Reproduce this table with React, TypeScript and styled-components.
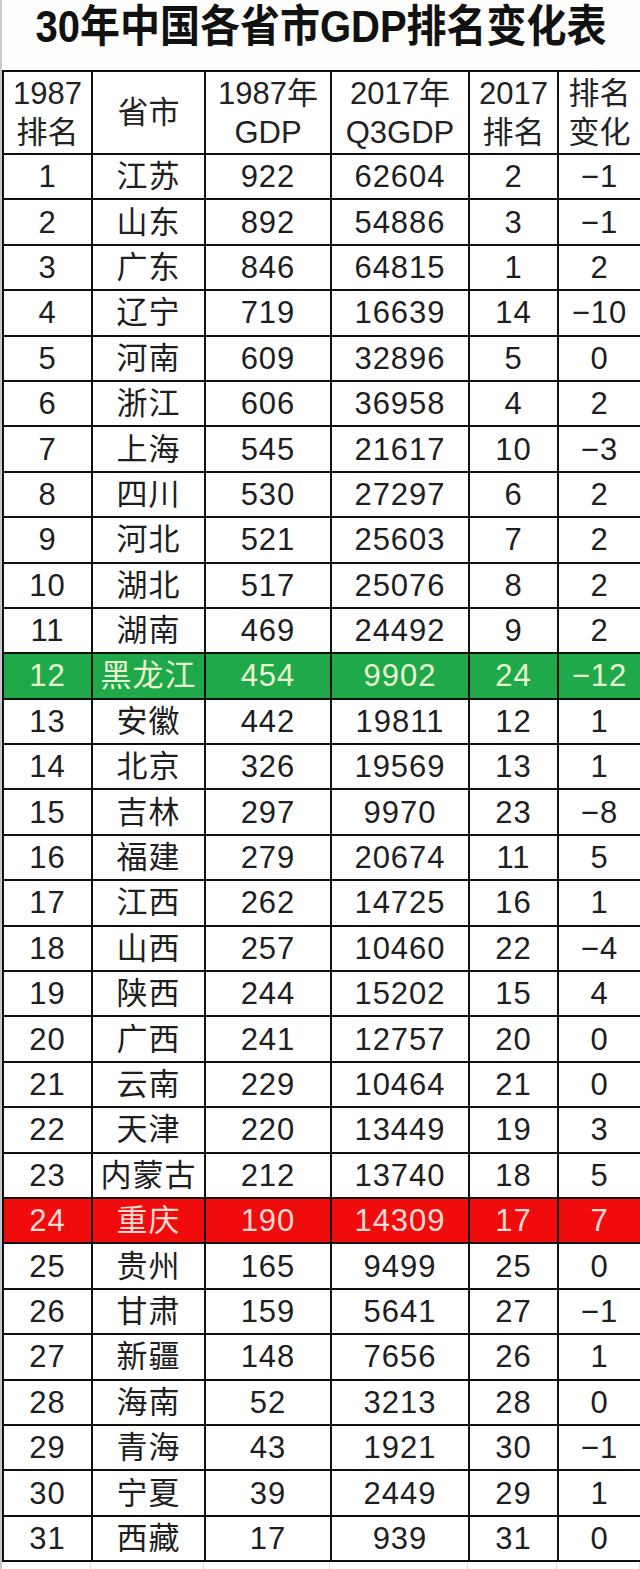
import React, { FC } from 'react';
import styled, { createGlobalStyle } from 'styled-components';

const GlobalStyle = createGlobalStyle`
  html, body {
    margin: 0;
    padding: 0;
    background: #ffffff;
  }
  body {
    font-family: "Liberation Sans", Arial, "Noto Sans CJK SC", sans-serif;
    color: #1a1a1a;
  }
`;

type Tone = 'plain' | 'green' | 'red';

interface IRow {
  rank: number;
  name: string;
  gdp1987: number;
  gdp2017: number;
  rank2017: number;
  change: number;
  tone?: Tone;
}

const rows: IRow[] = [
  { rank: 1, name: '江苏', gdp1987: 922, gdp2017: 62604, rank2017: 2, change: -1 },
  { rank: 2, name: '山东', gdp1987: 892, gdp2017: 54886, rank2017: 3, change: -1 },
  { rank: 3, name: '广东', gdp1987: 846, gdp2017: 64815, rank2017: 1, change: 2 },
  { rank: 4, name: '辽宁', gdp1987: 719, gdp2017: 16639, rank2017: 14, change: -10 },
  { rank: 5, name: '河南', gdp1987: 609, gdp2017: 32896, rank2017: 5, change: 0 },
  { rank: 6, name: '浙江', gdp1987: 606, gdp2017: 36958, rank2017: 4, change: 2 },
  { rank: 7, name: '上海', gdp1987: 545, gdp2017: 21617, rank2017: 10, change: -3 },
  { rank: 8, name: '四川', gdp1987: 530, gdp2017: 27297, rank2017: 6, change: 2 },
  { rank: 9, name: '河北', gdp1987: 521, gdp2017: 25603, rank2017: 7, change: 2 },
  { rank: 10, name: '湖北', gdp1987: 517, gdp2017: 25076, rank2017: 8, change: 2 },
  { rank: 11, name: '湖南', gdp1987: 469, gdp2017: 24492, rank2017: 9, change: 2 },
  { rank: 12, name: '黑龙江', gdp1987: 454, gdp2017: 9902, rank2017: 24, change: -12, tone: 'green' },
  { rank: 13, name: '安徽', gdp1987: 442, gdp2017: 19811, rank2017: 12, change: 1 },
  { rank: 14, name: '北京', gdp1987: 326, gdp2017: 19569, rank2017: 13, change: 1 },
  { rank: 15, name: '吉林', gdp1987: 297, gdp2017: 9970, rank2017: 23, change: -8 },
  { rank: 16, name: '福建', gdp1987: 279, gdp2017: 20674, rank2017: 11, change: 5 },
  { rank: 17, name: '江西', gdp1987: 262, gdp2017: 14725, rank2017: 16, change: 1 },
  { rank: 18, name: '山西', gdp1987: 257, gdp2017: 10460, rank2017: 22, change: -4 },
  { rank: 19, name: '陕西', gdp1987: 244, gdp2017: 15202, rank2017: 15, change: 4 },
  { rank: 20, name: '广西', gdp1987: 241, gdp2017: 12757, rank2017: 20, change: 0 },
  { rank: 21, name: '云南', gdp1987: 229, gdp2017: 10464, rank2017: 21, change: 0 },
  { rank: 22, name: '天津', gdp1987: 220, gdp2017: 13449, rank2017: 19, change: 3 },
  { rank: 23, name: '内蒙古', gdp1987: 212, gdp2017: 13740, rank2017: 18, change: 5 },
  { rank: 24, name: '重庆', gdp1987: 190, gdp2017: 14309, rank2017: 17, change: 7, tone: 'red' },
  { rank: 25, name: '贵州', gdp1987: 165, gdp2017: 9499, rank2017: 25, change: 0 },
  { rank: 26, name: '甘肃', gdp1987: 159, gdp2017: 5641, rank2017: 27, change: -1 },
  { rank: 27, name: '新疆', gdp1987: 148, gdp2017: 7656, rank2017: 26, change: 1 },
  { rank: 28, name: '海南', gdp1987: 52, gdp2017: 3213, rank2017: 28, change: 0 },
  { rank: 29, name: '青海', gdp1987: 43, gdp2017: 1921, rank2017: 30, change: -1 },
  { rank: 30, name: '宁夏', gdp1987: 39, gdp2017: 2449, rank2017: 29, change: 1 },
  { rank: 31, name: '西藏', gdp1987: 17, gdp2017: 939, rank2017: 31, change: 0 }
];

const colWidths = [89, 113, 126, 138, 89, 83];

const formatChange = (n: number) => (n < 0 ? `\u2212${Math.abs(n)}` : `${n}`);

const App: FC = () => (
  <>
    <GlobalStyle />
    <SPage>
      <STitle>
        <STitleText>30年中国各省市GDP排名变化表</STitleText>
      </STitle>
      <STable>
        <colgroup>
          {colWidths.map((w, i) => (
            <col key={i} style={{ width: w }} />
          ))}
        </colgroup>
        <thead>
          <SHeadRow>
            <SHeadCell>1987<br />排名</SHeadCell>
            <SHeadCell>省市</SHeadCell>
            <SHeadCell>1987年<br />GDP</SHeadCell>
            <SHeadCell>2017年<br />Q3GDP</SHeadCell>
            <SHeadCell>2017<br />排名</SHeadCell>
            <SHeadCell>排名<br />变化</SHeadCell>
          </SHeadRow>
        </thead>
        <tbody>
          {rows.map((r) => (
            <SRow key={r.rank} $tone={r.tone || 'plain'}>
              <SCell>{r.rank}</SCell>
              <SCell>{r.name}</SCell>
              <SCell>{r.gdp1987}</SCell>
              <SCell>{r.gdp2017}</SCell>
              <SCell>{r.rank2017}</SCell>
              <SCell>{formatChange(r.change)}</SCell>
            </SRow>
          ))}
        </tbody>
      </STable>
      <SGridTail>
        {colWidths.map((w, i) => (
          <STailCell key={i} style={{ width: w }} />
        ))}
      </SGridTail>
    </SPage>
  </>
);

export default App;

const SPage = styled.div`
  width: 640px;
  height: 1569px;
  overflow: hidden;
  background: #ffffff;
  border-left: 2px solid #c8c8c8;
  box-sizing: border-box;
`;

const STitle = styled.h1`
  margin: 0;
  height: 70px;
  display: flex;
  align-items: center;
  justify-content: center;
  padding-bottom: 24px;
  box-sizing: border-box;
  font-family: "Liberation Sans", Arial, "Noto Sans CJK SC", sans-serif;
  font-weight: 700;
  font-size: 40px;
  color: #111111;
  background: #fdfdfb;
`;

const STitleText = styled.span`
  display: inline-block;
  transform: scale(1, 1.12);
`;

const STable = styled.table`
  width: 638px;
  border-collapse: collapse;
  table-layout: fixed;
  font-family: "Liberation Sans", Arial, "Noto Sans CJK SC", sans-serif;
`;

const SHeadRow = styled.tr`
  height: 83px;
`;

const SHeadCell = styled.th`
  border: 2px solid #111111;
  padding: 0;
  font-weight: 400;
  font-size: 31px;
  line-height: 39px;
  color: #222222;
  text-align: center;
  vertical-align: middle;
  white-space: nowrap;
`;

const toneBg: Record<Tone, string> = {
  plain: '#ffffff',
  green: '#1fa94a',
  red: '#f00c0c'
};

const toneFg: Record<Tone, string> = {
  plain: '#1e1e1e',
  green: '#e8f7d2',
  red: '#ffd9d2'
};

const SRow = styled.tr<{ $tone: Tone }>`
  height: 45.4px;
  background: ${({ $tone }) => toneBg[$tone]};
  color: ${({ $tone }) => toneFg[$tone]};
`;

const SCell = styled.td`
  border: 2px solid #111111;
  padding: 0;
  font-size: 31px;
  line-height: 41px;
  text-align: center;
  vertical-align: middle;
  white-space: nowrap;
  letter-spacing: 1px;
`;

const SGridTail = styled.div`
  display: flex;
  height: 12px;
`;

const STailCell = styled.div`
  border-right: 1px solid #dedede;
  box-sizing: border-box;
  flex: none;
`;
